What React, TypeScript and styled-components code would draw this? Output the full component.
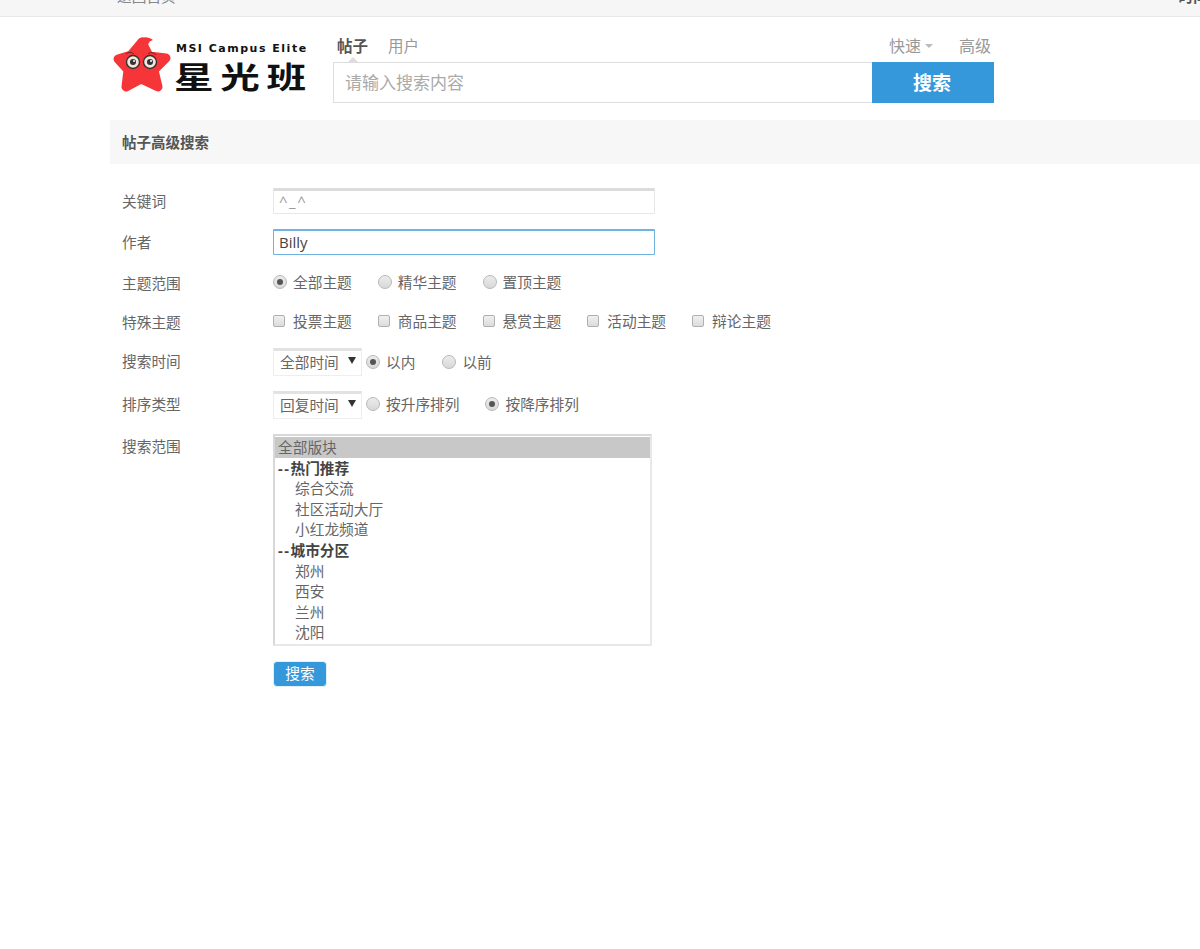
import React from "react";
import styled, { createGlobalStyle } from "styled-components";

const GlobalStyle = createGlobalStyle`
  html, body {
    margin: 0;
    padding: 0;
    background: #fff;
    overflow: hidden;
  }
  body {
    font-family: "Open Sans", "Noto Sans CJK SC", sans-serif;
    font-size: 14.7px;
    color: #666;
  }
`;

const Page = styled.div`
  width: 1200px;
  height: 949px;
  overflow: hidden;
`;

const TopBar = styled.div`
  height: 16px;
  background: #f6f6f6;
  border-bottom: 1px solid #e8e8e8;
  display: flex;
  justify-content: space-between;
  align-items: flex-end;
  overflow: hidden;
  padding-left: 117px;
  font-size: 14.7px;
  line-height: 20px;
  color: #888;
`;

const TopLink = styled.span`
  display: block;
  margin-bottom: 10px;
`;

const TopRight = styled.span`
  display: block;
  margin-bottom: 10px;
  margin-right: -8px;
  color: #555;
  font-weight: 700;
  white-space: nowrap;
`;

const Header = styled.header`
  display: flex;
  height: 103px;
  padding-left: 113px;
`;

const Logo = styled.div`
  width: 220px;
  height: 60px;
  margin-top: 20px;
  display: flex;
  align-items: flex-start;
`;

const LogoWords = styled.div`
  margin-left: 3px;
  padding-top: 5px;
  color: #111;
  font-family: "DejaVu Sans", "Noto Sans CJK SC", sans-serif;
`;

const LogoLatin = styled.div`
  font-size: 11px;
  line-height: 13px;
  font-weight: 700;
  letter-spacing: 1.5px;
  white-space: nowrap;
`;

const LogoCjk = styled.div`
  font-family: "Noto Sans CJK SC", sans-serif;
  font-size: 30px;
  line-height: 30px;
  font-weight: 700;
  letter-spacing: 5px;
  margin-top: 5px;
  margin-left: -2px;
  white-space: nowrap;
  transform: scaleX(1.32);
  transform-origin: left center;
`;

const SearchColumn = styled.div`
  width: 661px;
`;

const TabRow = styled.div`
  height: 45px;
  padding: 0 3px 5px 4px;
  display: flex;
  align-items: flex-end;
  justify-content: space-between;
  box-sizing: border-box;
`;

const TabGroup = styled.div`
  display: flex;
  gap: 20px;
`;

const Tab = styled.span<{ $active?: boolean }>`
  position: relative;
  font-size: 15.5px;
  line-height: 22px;
  font-weight: ${(p) => (p.$active ? 700 : 400)};
  color: ${(p) => (p.$active ? "#555" : "#999")};
  ${(p) =>
    p.$active &&
    `&::after {
      content: "";
      position: absolute;
      left: 50%;
      bottom: -5px;
      margin-left: -5px;
      border: 5px solid transparent;
      border-top: 0;
      border-bottom-color: #ddd;
    }`}
`;

const QuickGroup = styled.div`
  display: flex;
  align-items: center;
  font-size: 16px;
  line-height: 22px;
  color: #999;
`;

const QuickCaret = styled.span`
  width: 0;
  height: 0;
  margin: 0 26px 0 4px;
  border: 4.5px solid transparent;
  border-bottom: 0;
  border-top-color: #bbb;
`;

const SearchRow = styled.div`
  display: flex;
  height: 41px;
`;

const SearchInput = styled.input`
  flex: 1;
  min-width: 0;
  box-sizing: border-box;
  border: 1px solid #ddd;
  border-right: 0;
  padding: 0 11px;
  outline: none;
  font: inherit;
  font-size: 17px;
  color: #555;

  &::placeholder {
    color: #aaa;
    opacity: 1;
  }
`;

const SearchButton = styled.button`
  width: 122px;
  border: 0;
  padding: 0 2px 2px 0;
  background: #3498db;
  color: #fff;
  font: inherit;
  font-size: 19px;
  font-weight: 700;
`;

const TitleBar = styled.h2`
  margin: 0 0 0 110px;
  height: 44px;
  padding-left: 12px;
  background: #f7f7f7;
  font-size: 14.5px;
  font-weight: 700;
  line-height: 45px;
  color: #555;
`;

const Form = styled.form`
  margin-left: 122px;
  padding-top: 24px;
`;

const Row = styled.div<{ $height: number; $top: number }>`
  display: flex;
  align-items: center;
  height: ${(p) => p.$height}px;
  margin-top: ${(p) => p.$top}px;
`;

const TopRow = styled.div`
  display: flex;
  align-items: flex-start;
  margin-top: 15px;
`;

const Label = styled.div<{ $nudge?: number }>`
  width: 151px;
  flex: none;
  line-height: 22px;
  margin-top: ${(p) => p.$nudge ?? 0}px;
`;

const TextInput = styled.input<{ $focused?: boolean }>`
  width: 382px;
  height: 26px;
  box-sizing: border-box;
  padding: 0 5px 2px;
  outline: none;
  font: inherit;
  font-size: 15px;
  border-radius: 1px;
  color: ${(p) => (p.$focused ? "#444" : "#999")};
  letter-spacing: ${(p) => (p.$focused ? 0 : 1.5)}px;
  border: 1px solid ${(p) => (p.$focused ? "#6fb3e0" : "#e8e8e8")};
  border-top: ${(p) => (p.$focused ? "2px solid #6fb3e0" : "3px solid #dcdcdc")};
`;

const Choices = styled.div<{ $gap: number; $nudge?: number }>`
  display: flex;
  align-items: center;
  gap: ${(p) => p.$gap}px;
  margin-top: ${(p) => p.$nudge ?? 0}px;
`;

const Choice = styled.label`
  display: flex;
  align-items: center;
  gap: 6px;
  line-height: 20px;
  white-space: nowrap;
`;

const Radio = styled.span<{ $checked?: boolean }>`
  position: relative;
  width: 14px;
  height: 14px;
  box-sizing: border-box;
  border-radius: 50%;
  border: 1px solid #b8b8b8;
  background: linear-gradient(#ececec, #d8d8d8);
  ${(p) =>
    p.$checked &&
    `&::after {
      content: "";
      position: absolute;
      inset: 3px;
      border-radius: 50%;
      background: #555;
    }`}
`;

const Checkbox = styled.span`
  width: 12px;
  height: 12px;
  margin-right: 2px;
  box-sizing: border-box;
  border-radius: 2px;
  border: 1px solid #b0b0b0;
  background: linear-gradient(#f0f0f0, #dcdcdc);
`;

const SelectBox = styled.div`
  position: relative;
  width: 89px;
  height: 28px;
  margin-right: 4px;
  box-sizing: border-box;
  padding-left: 6px;
  border: 1px solid #eee;
  border-top: 3px solid #e2e2e2;
  line-height: 23px;
  background: #fff;

  &::after {
    content: "";
    position: absolute;
    right: 5px;
    top: 6px;
    border: 4px solid transparent;
    border-bottom: 0;
    border-top: 7px solid #333;
  }
`;

const ListBox = styled.div`
  width: 379px;
  height: 212px;
  box-sizing: border-box;
  border: 2px solid #e8e8e8;
  border-top: 2px solid #d8d8d8;
  border-left: 2px solid #d8d8d8;
  padding-top: 1px;
  overflow: hidden;
`;

const ListItem = styled.div<{ $kind: "selected" | "group" | "child" }>`
  height: 20.6px;
  line-height: 20px;
  white-space: nowrap;
  padding-left: ${(p) => (p.$kind === "child" ? 20 : 3)}px;
  color: ${(p) => (p.$kind === "group" ? "#444" : "#666")};
  font-weight: ${(p) => (p.$kind === "group" ? 700 : 400)};
  background: ${(p) => (p.$kind === "selected" ? "#c8c8c8" : "transparent")};
`;

const GroupDash = styled.span`
  letter-spacing: 1.5px;
`;

const SubmitRow = styled.div`
  margin: 15px 0 0 151px;
`;

const SubmitButton = styled.button`
  display: block;
  width: 54px;
  height: 26px;
  padding: 0 0 2px;
  border: 1px solid #e4f0f8;
  border-radius: 4px;
  background: #3498db;
  color: #fff;
  font: inherit;
  line-height: 20px;
`;

function LogoMark() {
  return (
    <svg width="60" height="58" viewBox="0 0 60 58">
      <path
        d="M29 5L36 19L53 21L41 33L45 50L28 42L13 50L15 33L5 22L18 18Z"
        fill="#f63538"
        stroke="#f63538"
        strokeWidth="9"
        strokeLinejoin="round"
      />
      <path d="M25 3C29 -1 36 0 40 3C36 4 34 7 35 14L25 14Z" fill="#f63538" />
      <path d="M13 17C15 15 19 15 21 17M35 17C37 15 41 15 43 18" stroke="#6a2a20" strokeWidth="1" fill="none" />
      <circle cx="20" cy="25" r="6.5" fill="#f4e6dc" stroke="#333" strokeWidth="1.4" />
      <circle cx="37" cy="25" r="6.5" fill="#f4e6dc" stroke="#333" strokeWidth="1.4" />
      <circle cx="20" cy="25" r="3" fill="#333" />
      <circle cx="37" cy="25" r="3" fill="#333" />
      <circle cx="21" cy="24" r="1" fill="#fff" />
      <circle cx="38" cy="24" r="1" fill="#fff" />
    </svg>
  );
}

const rangeItems: { text: string; kind: "selected" | "group" | "child" }[] = [
  { text: "全部版块", kind: "selected" },
  { text: "热门推荐", kind: "group" },
  { text: "综合交流", kind: "child" },
  { text: "社区活动大厅", kind: "child" },
  { text: "小红龙频道", kind: "child" },
  { text: "城市分区", kind: "group" },
  { text: "郑州", kind: "child" },
  { text: "西安", kind: "child" },
  { text: "兰州", kind: "child" },
  { text: "沈阳", kind: "child" },
];

export default function App() {
  return (
    <Page>
      <GlobalStyle />
      <TopBar>
        <TopLink>返回首页</TopLink>
        <TopRight>时间</TopRight>
      </TopBar>
      <Header>
        <Logo>
          <LogoMark />
          <LogoWords>
            <LogoLatin>MSI Campus Elite</LogoLatin>
            <LogoCjk>星光班</LogoCjk>
          </LogoWords>
        </Logo>
        <SearchColumn>
          <TabRow>
            <TabGroup>
              <Tab $active>帖子</Tab>
              <Tab>用户</Tab>
            </TabGroup>
            <QuickGroup>
              快速
              <QuickCaret />
              高级
            </QuickGroup>
          </TabRow>
          <SearchRow>
            <SearchInput placeholder="请输入搜索内容" />
            <SearchButton type="button">搜索</SearchButton>
          </SearchRow>
        </SearchColumn>
      </Header>
      <TitleBar>帖子高级搜索</TitleBar>
      <Form>
        <Row $height={26} $top={0}>
          <Label>关键词</Label>
          <TextInput defaultValue="^_^" />
        </Row>
        <Row $height={26} $top={15}>
          <Label>作者</Label>
          <TextInput $focused defaultValue="Billy" />
        </Row>
        <Row $height={26} $top={15}>
          <Label>主题范围</Label>
          <Choices $gap={26} $nudge={-2}>
            <Choice><Radio $checked />全部主题</Choice>
            <Choice><Radio />精华主题</Choice>
            <Choice><Radio />置顶主题</Choice>
          </Choices>
        </Row>
        <Row $height={26} $top={13}>
          <Label>特殊主题</Label>
          <Choices $gap={26} $nudge={-3}>
            <Choice><Checkbox />投票主题</Choice>
            <Choice><Checkbox />商品主题</Choice>
            <Choice><Checkbox />悬赏主题</Choice>
            <Choice><Checkbox />活动主题</Choice>
            <Choice><Checkbox />辩论主题</Choice>
          </Choices>
        </Row>
        <Row $height={28} $top={13}>
          <Label $nudge={-2}>搜索时间</Label>
          <SelectBox>全部时间</SelectBox>
          <Choices $gap={27}>
            <Choice><Radio $checked />以内</Choice>
            <Choice><Radio />以前</Choice>
          </Choices>
        </Row>
        <Row $height={28} $top={15}>
          <Label $nudge={-2}>排序类型</Label>
          <SelectBox>回复时间</SelectBox>
          <Choices $gap={26} $nudge={-2}>
            <Choice><Radio />按升序排列</Choice>
            <Choice><Radio $checked />按降序排列</Choice>
          </Choices>
        </Row>
        <TopRow>
          <Label $nudge={1}>搜索范围</Label>
          <ListBox>
            {rangeItems.map((item) => (
              <ListItem key={item.text} $kind={item.kind}>
                {item.kind === "group" && <GroupDash>--</GroupDash>}
                {item.text}
              </ListItem>
            ))}
          </ListBox>
        </TopRow>
        <SubmitRow>
          <SubmitButton type="button">搜索</SubmitButton>
        </SubmitRow>
      </Form>
    </Page>
  );
}
